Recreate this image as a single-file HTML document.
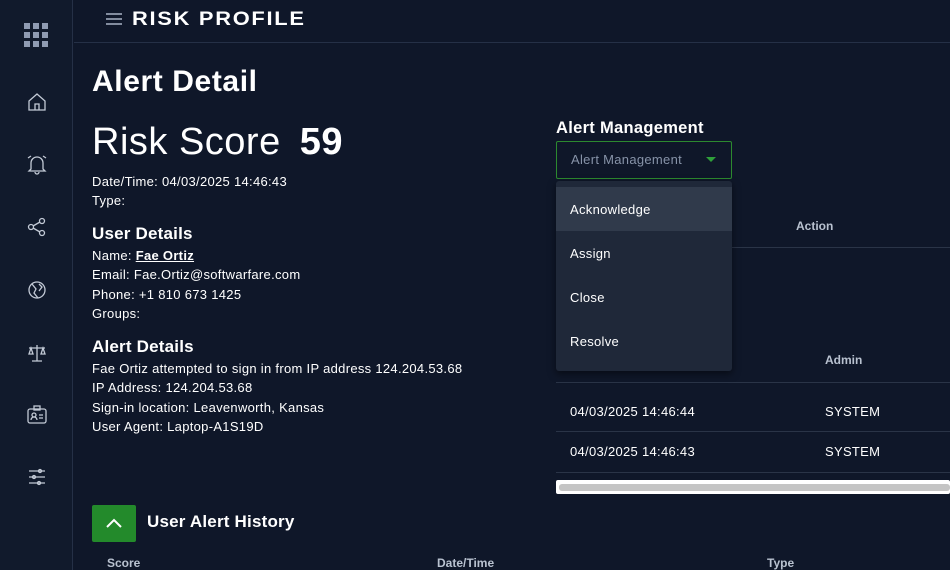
<!DOCTYPE html>
<html><head><style>
*{margin:0;padding:0;box-sizing:border-box}
body{width:950px;height:570px;overflow:hidden;background:#0f1729;font-family:"Liberation Sans",sans-serif;color:#fff;position:relative}
.a{position:absolute;white-space:nowrap}
.side{position:absolute;left:0;top:0;width:73px;height:570px;background:#111a2c;border-right:1px solid #253046}
.ic{position:absolute;left:26px}
.t{font-size:13px;color:#fff;letter-spacing:0.3px}
.h{font-weight:bold;font-size:17px;letter-spacing:0.2px}
.g{color:#b9c2d0;font-weight:bold;font-size:12px}
</style></head><body>
<div class="side">
<svg class="ic" style="left:24px;top:23px" width="26" height="25" fill="#8f9bb2"><rect x="0" y="0" width="6" height="6"/><rect x="9" y="0" width="6" height="6"/><rect x="18" y="0" width="6" height="6"/><rect x="0" y="9" width="6" height="6"/><rect x="9" y="9" width="6" height="6"/><rect x="18" y="9" width="6" height="6"/><rect x="0" y="18" width="6" height="6"/><rect x="9" y="18" width="6" height="6"/><rect x="18" y="18" width="6" height="6"/></svg>
<svg class="ic" style="top:91px" width="22" height="22" fill="none" stroke="#c3cad6" stroke-width="1.3"><path d="M3 10L11 3L19 10V19H3Z M9 19V13H13V19"/></svg>
<svg class="ic" style="top:153px" width="22" height="22" fill="none" stroke="#c3cad6" stroke-width="1.3"><path d="M5 16V10a6 6 0 0112 0v6l2 2H3z M9 19a2 2 0 004 0 M2 5l3-2 M20 5l-3-2"/></svg>
<svg class="ic" style="top:216px" width="22" height="22" fill="none" stroke="#c3cad6" stroke-width="1.3"><circle cx="5" cy="11" r="2.5"/><circle cx="16" cy="5" r="2.5"/><circle cx="16" cy="17" r="2.5"/><path d="M7 10L14 6 M7 12L14 16"/></svg>
<svg class="ic" style="top:279px" width="22" height="22" fill="none" stroke="#c3cad6" stroke-width="1.3"><circle cx="11" cy="11" r="8"/><path d="M6 5l4 5-2 4 4 5 M13 5l3 3-3 4"/></svg>
<svg class="ic" style="top:342px" width="22" height="22" fill="none" stroke="#c3cad6" stroke-width="1.3"><path d="M11 3V19 M6 19H16 M3 6H19 M5 6l-2 6h4z M17 6l-2 6h4z"/></svg>
<svg class="ic" style="top:404px" width="22" height="22" fill="none" stroke="#c3cad6" stroke-width="1.3"><rect x="2" y="5" width="18" height="14" rx="2"/><rect x="8" y="2" width="6" height="4"/><circle cx="8" cy="11" r="2"/><path d="M5 16a3 3 0 016 0 M13 11h4 M13 14h4"/></svg>
<svg class="ic" style="top:466px" width="22" height="22" fill="none" stroke="#c3cad6" stroke-width="1.3"><path d="M3 5H19 M3 11H19 M3 17H19"/><circle cx="14" cy="5" r="1.5"/><circle cx="8" cy="11" r="1.5"/><circle cx="13" cy="17" r="1.5"/></svg>
</div>
<div class="a" style="left:74px;top:42px;width:876px;height:1px;background:#253046"></div>
<svg class="a" style="left:106px;top:12px" width="16" height="14" stroke="#a9b4c6" stroke-width="1.6"><path d="M0 2H16M0 7H16M0 12H16"/></svg>
<div class="a" style="left:132px;top:9px;font-size:19px;font-weight:bold;letter-spacing:1.5px;transform:scaleX(1.15);transform-origin:left">RISK PROFILE</div>
<div class="a" style="left:92px;top:65px;font-size:30px;font-weight:bold;letter-spacing:0.6px">Alert Detail</div>
<div class="a" style="left:92px;top:121px;font-size:38px;letter-spacing:0.5px">Risk Score <b style="margin-left:8px">59</b></div>
<div class="a t" style="left:92px;top:174px">Date/Time: 04/03/2025 14:46:43</div>
<div class="a t" style="left:92px;top:193px">Type:</div>
<div class="a h" style="left:92px;top:224px">User Details</div>
<div class="a t" style="left:92px;top:248px">Name: <b style="text-decoration:underline">Fae Ortiz</b></div>
<div class="a t" style="left:92px;top:267px">Email: Fae.Ortiz@softwarfare.com</div>
<div class="a t" style="left:92px;top:287px">Phone: +1 810 673 1425</div>
<div class="a t" style="left:92px;top:306px">Groups:</div>
<div class="a h" style="left:92px;top:337px">Alert Details</div>
<div class="a t" style="left:92px;top:361px">Fae Ortiz attempted to sign in from IP address 124.204.53.68</div>
<div class="a t" style="left:92px;top:380px">IP Address: 124.204.53.68</div>
<div class="a t" style="left:92px;top:400px">Sign-in location: Leavenworth, Kansas</div>
<div class="a t" style="left:92px;top:419px">User Agent: Laptop-A1S19D</div>
<div class="a" style="left:92px;top:505px;width:44px;height:37px;background:#238a2b;border-radius:2px"></div>
<svg class="a" style="left:105px;top:517px" width="18" height="12" fill="none" stroke="#fff" stroke-width="2"><path d="M2 10L9 3L16 10"/></svg>
<div class="a h" style="left:147px;top:512px">User Alert History</div>
<div class="a g" style="left:107px;top:556px">Score</div>
<div class="a g" style="left:437px;top:556px">Date/Time</div>
<div class="a g" style="left:767px;top:556px">Type</div>
<div class="a h" style="left:556px;top:119px;font-size:16.5px;letter-spacing:0.3px">Alert Management</div>
<div class="a" style="left:556px;top:141px;width:176px;height:38px;border:1.5px solid #2c8a2f;border-radius:2px"></div>
<div class="a" style="left:571px;top:152px;font-size:13px;color:#8793a8;letter-spacing:0.3px">Alert Management</div>
<svg class="a" style="left:706px;top:157px" width="10" height="6" fill="#2fa03a"><path d="M0 0H10L5 5z"/></svg>
<div class="a g" style="left:796px;top:219px">Action</div>
<div class="a" style="left:556px;top:247px;width:394px;height:1px;background:#2a3447"></div>
<div class="a g" style="left:825px;top:353px">Admin</div>
<div class="a" style="left:556px;top:382px;width:394px;height:1px;background:#2a3447"></div>
<div class="a t" style="left:570px;top:404px">04/03/2025 14:46:44</div>
<div class="a t" style="left:825px;top:404px">SYSTEM</div>
<div class="a" style="left:556px;top:431px;width:394px;height:1px;background:#2a3447"></div>
<div class="a t" style="left:570px;top:444px">04/03/2025 14:46:43</div>
<div class="a t" style="left:825px;top:444px">SYSTEM</div>
<div class="a" style="left:556px;top:472px;width:394px;height:1px;background:#2a3447"></div>
<div class="a" style="left:556px;top:480px;width:394px;height:14px;background:#fff;border-radius:2px"></div>
<div class="a" style="left:559px;top:484px;width:391px;height:7px;background:#c4c4c4;border-radius:3px"></div>
<div class="a" style="left:556px;top:181px;width:176px;height:190px;background:#1f2839;border-radius:3px;box-shadow:0 3px 8px rgba(0,0,0,.5)"></div>
<div class="a" style="left:556px;top:187px;width:176px;height:44px;background:#303a4b"></div>
<div class="a t" style="left:570px;top:202px">Acknowledge</div>
<div class="a t" style="left:570px;top:246px">Assign</div>
<div class="a t" style="left:570px;top:290px">Close</div>
<div class="a t" style="left:570px;top:334px">Resolve</div>
</body></html>
